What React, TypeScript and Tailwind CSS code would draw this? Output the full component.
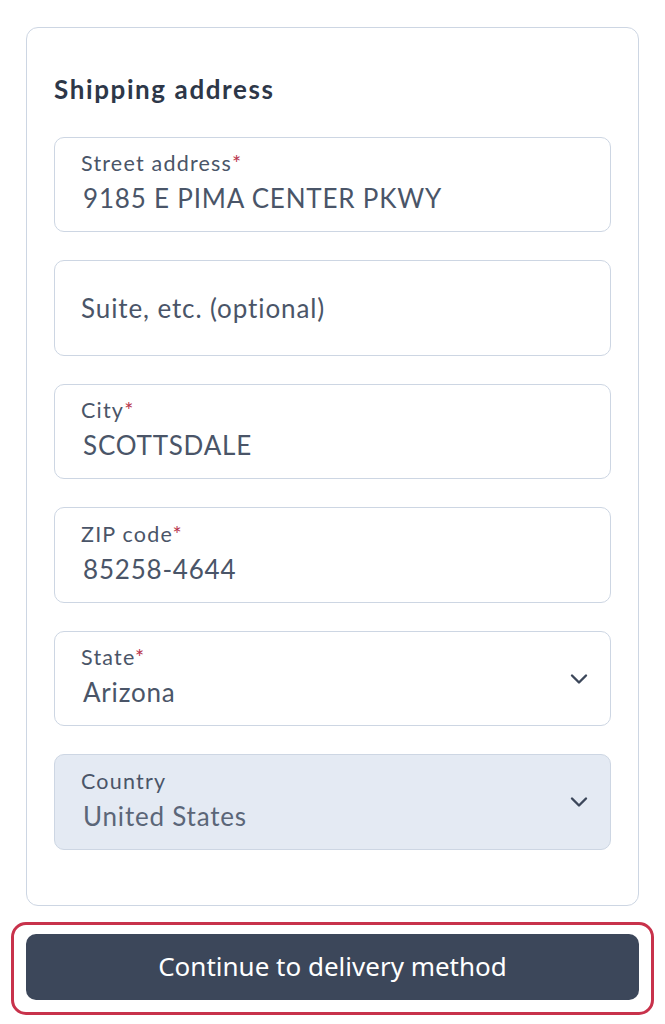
import React from "react";

const Chevron = () => (
  <svg width="18" height="12" viewBox="0 0 18 12" fill="none" className="shrink-0">
    <path d="M2 2.5 L9 9.5 L16 2.5" stroke="#3c475a" strokeWidth="2.4" strokeLinecap="round" strokeLinejoin="round" />
  </svg>
);

type FieldProps = {
  label?: string;
  required?: boolean;
  value?: string;
  placeholder?: string;
  select?: boolean;
  disabled?: boolean;
};

const Field = ({ label, required, value, placeholder, select, disabled }: FieldProps) => (
  <div
    className={`h-[95.5px] rounded-[10px] border-[1.5px] border-[#cdd6e3] flex items-center pl-[26px] pr-[22px] ${
      disabled ? "bg-[#e4eaf3]" : "bg-white"
    }`}
  >
    <div className="flex-1 flex flex-col">
      {placeholder ? (
        <span className="text-[26px] leading-[30px] tracking-[0.9px] text-[#4a5568]">{placeholder}</span>
      ) : (
        <>
          <span className="text-[21.5px] leading-[26px] tracking-[1.2px] text-[#4a5568] -mt-[5px]">
            {label}
            {required && <span className="text-[#b8324a]">*</span>}
          </span>
          <span
            className={`text-[26px] leading-[32px] tracking-[0.8px] mt-[6px] pl-[2px] ${
              disabled ? "text-[#5b6678]" : "text-[#4a5568]"
            }`}
          >
            {value}
          </span>
        </>
      )}
    </div>
    {select && <Chevron />}
  </div>
);

export default function App() {
  return (
    <div className="w-[665px] h-[1024px] bg-white px-[11px] pt-[27px]" style={{ fontFamily: "Lato, sans-serif" }}>
      <div className="mx-[15px] rounded-[12px] border-[1.5px] border-[#cdd6e3] bg-white px-[27px] pt-[44px] pb-[55.5px]">
        <h2 className="text-[26px] leading-[34px] font-bold tracking-[1.6px] text-[#2d3748] mb-[30.5px]">Shipping address</h2>
        <div className="flex flex-col gap-[28.1px]">
          <Field label="Street address" required value="9185 E PIMA CENTER PKWY" />
          <Field placeholder="Suite, etc. (optional)" />
          <Field label="City" required value="SCOTTSDALE" />
          <Field label="ZIP code" required value="85258-4644" />
          <Field label="State" required value="Arizona" select />
          <Field label="Country" value="United States" select disabled />
        </div>
      </div>
      <div className="mt-[15.5px] rounded-[15px] border-[3px] border-[#c8324b] px-[12px] pt-[9px] pb-[12px]">
        <button
          className="w-full h-[66px] rounded-[10px] bg-[#3c475a] text-white text-[26px] flex items-center justify-center"
          style={{ fontFamily: "'Noto Sans', sans-serif" }}
        >
          Continue to delivery method
        </button>
      </div>
    </div>
  );
}
